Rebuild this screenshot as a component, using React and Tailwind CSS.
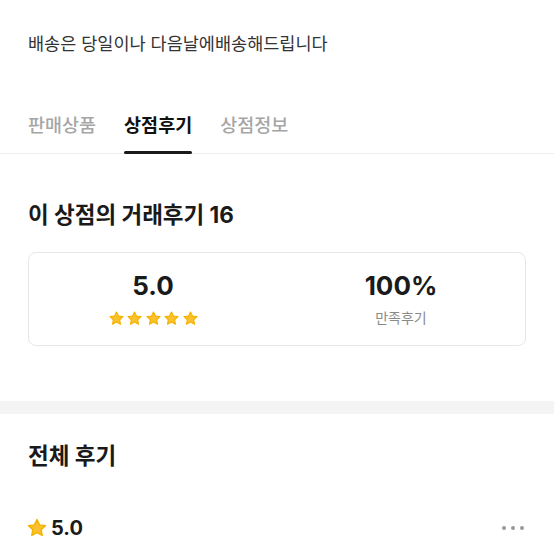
import React from "react";

const Star = ({ className }) => (
  <svg className={className} viewBox="0 0 24 24" fill="#FBC02D" stroke="#F5B301" strokeWidth="1.6" strokeLinejoin="round">
    <path d="M12 2.8l2.8 5.8 6.4.8-4.7 4.4 1.2 6.3L12 17l-5.7 3.1 1.2-6.3-4.7-4.4 6.4-.8z" />
  </svg>
);

const tabs = ["판매상품", "상점후기", "상점정보"];

export default function App() {
  return (
    <div className="min-h-screen bg-white font-[Inter,'Noto_Sans_CJK_KR',sans-serif] text-[#1a1a1a]">
      {/* Shop notice */}
      <p className="px-7 pt-8 text-[17.5px] leading-6 text-[#333]">
        배송은 당일이나 다음날에배송해드립니다
      </p>

      {/* Tabs */}
      <div className="mt-14 flex gap-7 border-b border-[#eeeeee] px-7">
        {tabs.map((tab, i) => (
          <div key={tab} className="-mb-px flex flex-col">
            <span
              className={`text-[18.5px] leading-[26px] ${
                i === 1 ? "font-bold text-[#111]" : "font-medium text-[#a6a6a6]"
              }`}
            >
              {tab}
            </span>
            <div className={`mt-[13px] h-[3px] rounded-full ${i === 1 ? "bg-[#1a1a1a]" : "bg-transparent"}`} />
          </div>
        ))}
      </div>

      {/* Review summary */}
      <div className="px-7 pt-[47px]">
        <h2 className="text-[22.5px] font-bold leading-7">이 상점의 거래후기 16</h2>
        <div className="mt-[23px] grid grid-cols-2 rounded-lg border border-[#e6e6e6] py-[17px]">
          <div className="flex flex-col items-center">
            <span className="text-[26px] font-bold leading-8">5.0</span>
            <div className="mt-[6px] flex h-5 items-center gap-[1.5px]">
              {[0, 1, 2, 3, 4].map((n) => (
                <Star key={n} className="h-[17px] w-[17px]" />
              ))}
            </div>
          </div>
          <div className="flex flex-col items-center">
            <span className="text-[26px] font-bold leading-8">100%</span>
            <span className="mt-[6px] text-[14px] leading-5 text-[#8a8a8a]">만족후기</span>
          </div>
        </div>
      </div>

      <div className="mt-[55px] h-[13px] bg-[#f4f4f4]" />

      {/* All reviews */}
      <div className="px-7 pt-7">
        <h2 className="text-[22.5px] font-bold leading-7">전체 후기</h2>
        <div className="mt-[46px] flex items-center justify-between">
          <div className="-ml-[2px] flex items-center gap-[3px]">
            <Star className="h-[22px] w-[22px]" />
            <span className="text-[20px] font-bold leading-6">5.0</span>
          </div>
          <div className="flex items-center gap-[5px] pr-[2px]">
            <span className="h-1 w-1 rounded-full bg-[#999]" />
            <span className="h-1 w-1 rounded-full bg-[#999]" />
            <span className="h-1 w-1 rounded-full bg-[#999]" />
          </div>
        </div>
      </div>
    </div>
  );
}
